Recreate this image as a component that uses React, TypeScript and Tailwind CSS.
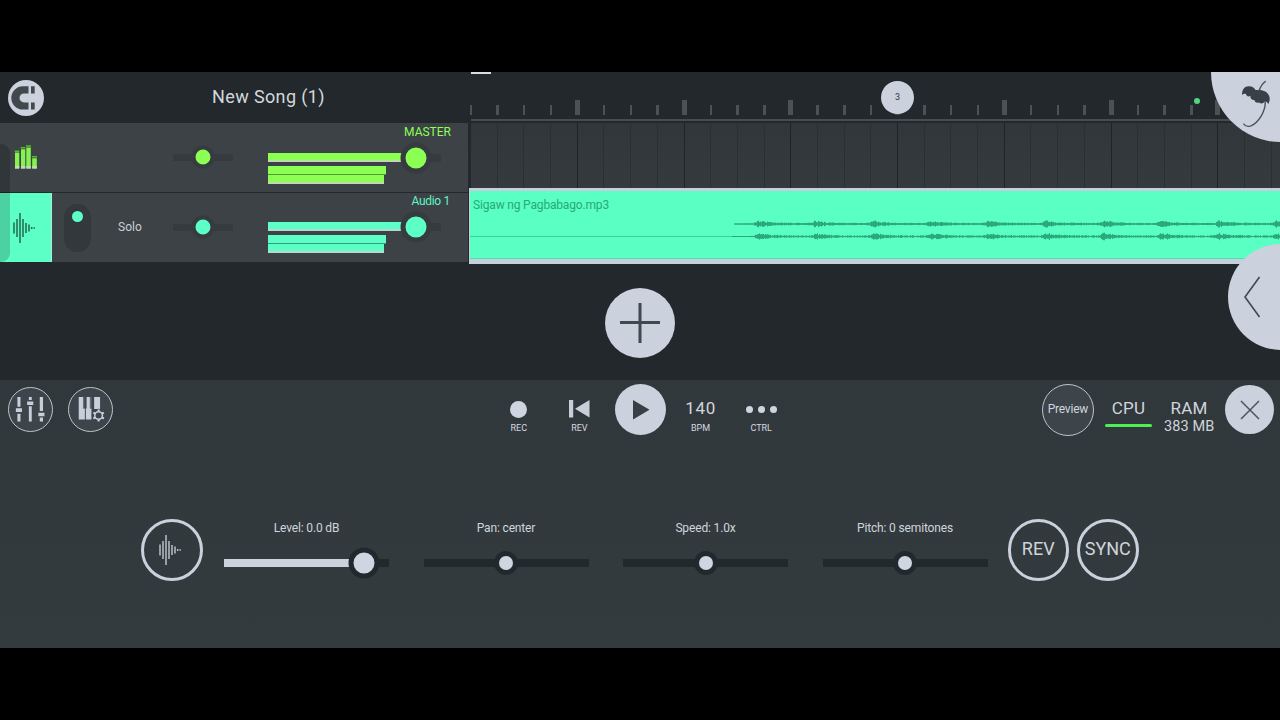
import clsx from 'clsx'
import type { ReactNode } from 'react'

const CELL = 26.69
const cells = Array.from({ length: 31 }, (_, i) => i)

const tracks = [
  { id: 1, name: 'MASTER', variant: 'master' },
  { id: 2, name: 'Audio 1', variant: 'audio' },
]

const sampleControls = [
  { id: 1, label: 'Level: 0.0 dB', value: 85, filled: true },
  { id: 2, label: 'Pan: center', value: 50, filled: false },
  { id: 3, label: 'Speed: 1.0x', value: 50, filled: false },
  { id: 4, label: 'Pitch: 0 semitones', value: 50, filled: false },
]

// one channel of the clip, a burst on every beat
const channelPath = (mid: number, seed: number) => {
  let s = seed
  const random = () => {
    s = (s * 16807) % 2147483647
    return s / 2147483647
  }
  let d = `M0 ${mid}`
  for (let x = 264; x < 811; x += 1) {
    const phase = (x - 287 + 57.6) % 57.6
    const attack = Math.exp(-(57.6 - phase) / 2)
    const beat = x < 284 ? 0 : 3.4 * (Math.exp(-phase / 12) + attack)
    const tail = x < 284 ? 0.3 + (x - 264) / 60 : 0.4 + random() * 0.8
    const amp = beat * (0.3 + random() * 0.7) + tail
    d += `M${x + 0.5} ${(mid - amp).toFixed(1)}V${(mid + amp).toFixed(1)}`
  }
  return d
}

const WaveIcon = ({ className }: { className?: string }) => (
  <svg viewBox="0 0 24 32" className={clsx('h-8 w-6', className)}>
    <g stroke="currentColor" strokeWidth="1.5">
      <path d="M2 10.5v11M5 7v18M8 1v30M11 7v18M14 11v10M17 12.5v7" />
      <path d="M19.7 15v2M22.2 15.3v1.4" />
    </g>
  </svg>
)

const MasterIcon = () => (
  <svg viewBox="0 0 24 24" className="h-6 w-6 overflow-visible">
    <path fill="#4fc51d" d="M.7 4.5h4.6v1.4H.7zM6.7 1h4.6v1.4H6.7zM12 -.7h5v1.4h-5zM18 10h5v1.4h-5z" />
    <path fill="#84f250" d="M1 6.6h4.3V22H1zM7 3.3h4.3V22H7zM12.3 1.5h4.5V22h-4.5zM18.2 12.2h4.6V22h-4.6z" />
    <path fill="#bfdcae" d="M1 20h4.3v2.7H1zM7 20h4.3v2.7H7zM12.3 20h4.5v2.7h-4.5zM18.2 20h4.6v2.7h-4.6z" />
  </svg>
)

const MagnetIcon = () => (
  <svg viewBox="0 0 36 36" className="h-9 w-9 shrink-0">
    <circle cx="18" cy="18" r="18" fill="#cbd1dd" />
    <path
      fill="#41484e"
      d="M20.5 6.2H15A11.6 11.6 0 0 0 15 29.6H20.5V22.4H16A4.5 4.5 0 0 1 16 13.4H20.5zM23 6.2h3.7v7.2h-3.7zM23 22.4h3.7v7.2h-3.7z"
    />
  </svg>
)

const UmbrellaIcon = () => (
  <svg viewBox="0 0 69 70" className="h-[70px] w-[69px]">
    <path
      fill="#394047"
      d="M31 23C31 17 34 14 38 14.3C41 14.2 43 15.5 44.5 18C48 18 54 17.5 57 22C59.5 25 59 29 57.2 32.3C56.5 30 55 29.2 53.5 29.8C52 31.8 50 32 48 30.5C46 31 43.5 30.5 43.5 28C40.5 28 39 26 39.5 23.7C37.5 25 35.5 24.5 35 22C33.5 21.5 32 22 31 23z"
    />
    <path fill="none" stroke="#4a5158" strokeWidth="1.4" strokeLinecap="round" d="M54.3 9.5C51 12 49.3 15 48 19M54.2 30C54.5 40 47 51 40 53.8C36.5 55 34 54 32.8 52" />
  </svg>
)

const MixerIcon = () => (
  <svg viewBox="0 0 45 45" className="h-full w-full">
    <path fill="#c9cfda" d="M8.8 9.5h3.2v10H8.8zM8.8 27h3.2v8H8.8zM20.8 9.5h3v3h-3zM20.8 19h3v16h-3zM32.2 9.5h3.4v14.5h-3.4zM32.2 31h3.4v4h-3.4z" />
    <path fill="#c9cfda" d="M7.2 21.2h6.4v4H7.2zM19 14.2h6.4v3.6H19zM30.7 26h6.4v3.5h-6.4z" />
  </svg>
)

const KeysIcon = () => (
  <svg viewBox="0 0 45 45" className="h-full w-full">
    <path fill="#c9cfda" d="M10.2 9.5h4.4v12h2v11.5h-6.4zM18.4 9.5h3.4v12h1.7v11.5h-5.9V21.5h.8zM26.3 9.5h6.2v12.5h-6.2z" />
    <path fill="#7f878f" d="M15 9.5h.9v11.5h-.9zM22.4 9.5h.9v11.5h-.9z" />
    <circle cx="31" cy="28.8" r="7.2" fill="#3d444a" />
    <circle cx="31" cy="28.8" r="4" fill="none" stroke="#c9cfda" strokeWidth="1.6" />
    <path stroke="#c9cfda" strokeWidth="2.2" d="M31 24.8v-2.3M31 32.8v2.3M34.5 26.8l2-1.1M27.5 26.8l-2-1.1M34.5 30.8l2 1.1M27.5 30.8l-2 1.1" />
  </svg>
)

const Slider = ({
  value,
  track,
  fill,
  knob,
  className,
}: {
  value: number
  track: string
  fill?: string
  knob: string
  className?: string
}) => (
  <div className={clsx('relative', track, className)}>
    {fill && <div className={clsx('h-full', fill)} style={{ width: `${value}%` }} />}
    <div
      className={clsx('absolute top-1/2 -translate-x-1/2 -translate-y-1/2 rounded-full', knob)}
      style={{ left: `${value}%` }}
    />
  </div>
)

const TrackRow = ({ name, variant }: { name: string; variant: string }) => {
  const isAudio = variant === 'audio'
  const bar = isAudio
    ? 'bg-[#5cffc6] border-b-2 border-[#b5d8cf]'
    : 'bg-[#8bff54] border-b-2 border-[#bedbac]'
  return (
    <div className="flex h-[69px] w-[468px] bg-[#3c4246]">
      <div
        className={clsx(
          'flex w-[52px] items-center',
          isAudio ? 'border-r border-[#a9efd5] bg-[#5cffc6] pl-[12px]' : 'pl-[14px]',
        )}
      >
        {isAudio ? <WaveIcon className="text-[#1f6a51]" /> : <MasterIcon />}
      </div>
      <div className="flex w-[121px] items-center">
        {isAudio && (
          <>
            <div className="ml-3 flex h-[48px] w-[27px] justify-center rounded-full bg-[#32383b] pt-[7px]">
              <div className="h-[11px] w-[11px] rounded-full bg-[#5cffc6]" />
            </div>
            <span className="ml-[27px] pb-[2px] text-[12px] leading-none text-[#c9cfd6]">Solo</span>
          </>
        )}
      </div>
      <div className="flex w-[95px] items-center pb-px">
        <Slider
          value={50}
          className="h-[7px] w-[60px]"
          track="bg-[#353b3f]"
          knob={clsx(
            'h-[23px] w-[23px] border-[4.5px] border-[#353b3f]',
            isAudio ? 'bg-[#5cffc6]' : 'bg-[#8bff54]',
          )}
        />
      </div>
      <div className="w-[183px]">
        <p
          className={clsx(
            'text-right text-[12px] leading-[14px]',
            isAudio
              ? 'h-[29px] pt-[1px] pr-[1px] tracking-[-0.3px] text-[#62f5c3]'
              : 'h-[30px] pt-[2px] text-[#8bff54]',
          )}
        >
          {name}
        </p>
        <Slider
          value={85.5}
          className="h-[9px] w-[173px]"
          track="bg-linear-to-b from-[#3c4246] from-10% via-[#353b3f] via-10% to-[#353b3f]"
          fill={bar}
          knob={clsx(
            'h-[31px] w-[31px] border-5 border-[#353b3f]',
            isAudio ? 'bg-[#5cffc6]' : 'bg-[#8bff54]',
          )}
        />
        <div
          className={clsx(
            'mt-[4px] h-[9px] w-[117.5px] border-b',
            isAudio ? 'border-[#359c79] bg-[#5cffc6]' : 'border-[#4f9a2c] bg-[#8bff54]',
          )}
        />
        <div className={clsx('h-[9px] w-[115.5px]', bar)} />
      </div>
    </div>
  )
}

const Ruler = () => (
  <div className="ml-[2px] flex h-[51px] flex-col justify-end">
    <div className="flex h-[15px] items-end">
      {cells.map((i) => (
        <div key={i} className="shrink-0" style={{ width: CELL }}>
          {i > 0 && i % 4 === 0 ? (
            <div className="-ml-[3px] h-[15px] w-[5px] bg-[#4b5155]" />
          ) : (
            <div className="-ml-[1.5px] h-[10px] w-[2.5px] bg-[#4b5155]" />
          )}
        </div>
      ))}
    </div>
    <div className="mt-[3.5px] mb-[2px] h-[2.5px] shrink-0 bg-[#464d51]" />
  </div>
)

const Playlist = () => (
  <div className="relative flex w-[811px] flex-col overflow-hidden">
    <Ruler />
    <div className="ml-[2px] flex h-[65px] overflow-hidden bg-linear-to-b from-[#30373b] to-[#353a3e]">
      {cells.map((i) => (
        <div
          key={i}
          className={clsx(
            'shrink-0 border-r',
            i % 4 === 3 ? 'border-[#1e2427]' : 'border-[#293034]',
          )}
          style={{ width: CELL }}
        />
      ))}
    </div>
    <div className="relative h-[76px] border-t-3 border-b-5 border-l border-[#c5d0da] bg-[#5affc4]">
      <span className="absolute top-[6.5px] left-[3px] text-[12px] leading-[14px] tracking-[-0.17px] text-[#27a97b]">
        Sigaw ng Pagbabago.mp3
      </span>
      <svg viewBox="0 0 811 68" className="h-[68px] w-[811px]">
        <path d="M0 45.5H262" stroke="#3ed19e" strokeWidth="1" />
        <path d="M264 33H811M262 45.5H811" stroke="#27a67a" strokeWidth="1" />
        <path d={channelPath(33, 71)} stroke="#2ba87d" strokeWidth="1" />
        <path d={channelPath(45.5, 913)} stroke="#2ba87d" strokeWidth="1" />
        <path d="M0 67.5H811" stroke="#52e0b0" strokeWidth="1" />
      </svg>
    </div>
    <div className="absolute top-0 left-[2px] h-[2px] w-5 bg-[#d9dde2]" />
    <div className="absolute top-[9px] left-[412px] flex h-[33px] w-[33px] items-center justify-center rounded-full bg-[#cbd1dd] pb-px text-[9px] leading-none text-[#30363d]">
      3
    </div>
    <div className="absolute top-[26px] left-[725px] h-[6px] w-[6px] rounded-full bg-[#4fd684]" />
  </div>
)

const TransportItem = ({ label, children }: { label: string; children: ReactNode }) => (
  <div className="flex w-[60.6px] flex-col items-center pt-[7px]">
    <div className="flex h-[30px] items-center pt-[2px]">{children}</div>
    <span className="text-[9px] leading-[10px] text-[#d5dae0]">{label}</span>
  </div>
)

const Transport = () => (
  <div className="grid h-[60px] grid-cols-[1fr_auto_1fr] items-center">
    <div className="flex pb-px">
      <div className="flex w-[60.6px] justify-center">
        <div className="h-[45px] w-[45px] rounded-full border-[1.5px] border-[#bcc3cb] bg-[#3d444a]">
          <MixerIcon />
        </div>
      </div>
      <div className="flex w-[60.6px] justify-center">
        <div className="h-[45px] w-[45px] rounded-full border-[1.5px] border-[#bcc3cb] bg-[#3d444a]">
          <KeysIcon />
        </div>
      </div>
    </div>
    <div className="flex items-center pb-px">
      <TransportItem label="REC">
        <div className="h-[17px] w-[17px] rounded-full bg-[#cfd5e0]" />
      </TransportItem>
      <TransportItem label="REV">
        <svg viewBox="0 0 21 18" className="h-[18px] w-[21px]">
          <path fill="#c9cfd9" d="M0 0h4.2v17.5H0zM20.5 0v17.5L6 8.8z" />
        </svg>
      </TransportItem>
      <div className="flex w-[60.6px] justify-center">
        <div className="flex h-[51px] w-[51px] items-center justify-center rounded-full bg-[#cbd1dd]">
          <svg viewBox="0 0 17 20" className="ml-[3px] h-5 w-[17px]">
            <path fill="#383f45" d="M0 0L16.5 9.7L0 19.4z" />
          </svg>
        </div>
      </div>
      <TransportItem label="BPM">
        <span className="pb-[2px] text-[17px] leading-none tracking-[0.6px] text-[#d0d6dd]">140</span>
      </TransportItem>
      <TransportItem label="CTRL">
        <div className="flex gap-[5px]">
          <div className="h-[7px] w-[7px] rounded-full bg-[#cfd5e0]" />
          <div className="h-[7px] w-[7px] rounded-full bg-[#cfd5e0]" />
          <div className="h-[7px] w-[7px] rounded-full bg-[#cfd5e0]" />
        </div>
      </TransportItem>
    </div>
    <div className="flex items-center justify-end">
      <div className="flex w-[60.6px] justify-center">
        <div className="flex h-[52px] w-[52px] items-center justify-center rounded-full border border-[#bcc3cb] bg-[#3d444a] pb-[2px] text-[12px] leading-none tracking-[-0.2px] whitespace-nowrap text-[#d0d6dd]">
          Preview
        </div>
      </div>
      <div className="flex h-[24px] w-[60.6px] flex-col items-center">
        <span className="text-[17px] leading-[20px] tracking-[0.2px] text-[#cfd5dc]">CPU</span>
        <div className="mt-[6px] h-[3px] w-[47px] shrink-0 rounded-full bg-[#4df053]" />
      </div>
      <div className="flex h-[24px] w-[60.6px] flex-col items-center whitespace-nowrap">
        <span className="text-[17px] leading-[20px] tracking-[0.2px] text-[#cfd5dc]">RAM</span>
        <span className="mt-px text-[14.5px] leading-[16px] tracking-[0.1px] text-[#cfd5dc]">383 MB</span>
      </div>
      <div className="flex w-[60.6px] justify-center pb-px">
        <div className="flex h-[49px] w-[49px] items-center justify-center rounded-full bg-[#cbd1dd]">
          <svg viewBox="0 0 20 20" className="h-5 w-5">
            <path fill="none" stroke="#4c535a" strokeWidth="1.5" d="M1 1l18 18M19 1L1 19" />
          </svg>
        </div>
      </div>
    </div>
  </div>
)

const RingButton = ({ children }: { children: ReactNode }) => (
  <div className="flex h-[61.5px] w-[61.5px] shrink-0 items-center justify-center rounded-full border-[3px] border-[#cbd1dc] text-[18px] leading-none text-[#cfd5dc]">
    {children}
  </div>
)

const SamplePanel = () => (
  <div className="flex pt-[79px] pl-[141px]">
    <RingButton>
      <WaveIcon className="mr-[3px] text-[#b9c0c8]" />
    </RingButton>
    <div className="ml-[21.5px] flex gap-[34.5px]">
      {sampleControls.map((control) => (
        <div key={control.id} className="flex w-[165px] flex-col items-center">
          <span className="pt-px text-[12px] leading-[16px] tracking-[-0.15px] text-[#cfd5dc]">{control.label}</span>
          <Slider
            value={control.value}
            className="mt-[23px] h-[8px] w-full"
            track="bg-[#22292d]"
            fill={control.filled ? 'bg-[#cbd1dd]' : undefined}
            knob={clsx(
              'border-[5px] border-[#22292d] bg-[#cfd5e1]',
              control.filled ? 'h-[31px] w-[31px]' : 'h-[24px] w-[24px]',
            )}
          />
        </div>
      ))}
    </div>
    <div className="ml-[20px] flex gap-[8px]">
      <RingButton>
        <span className="mb-[2px]">REV</span>
      </RingButton>
      <RingButton>
        <span className="mb-[2px]">SYNC</span>
      </RingButton>
    </div>
  </div>
)

const App = () => {
  return (
    <main className="h-[720px] w-[1280px] overflow-hidden bg-black py-[72px] font-['Roboto',sans-serif]">
      <div className="relative flex h-[576px] flex-col overflow-hidden bg-[#22282b]">
        <section className="relative h-[308px]">
          <div className="flex">
            <div className="w-[469px]">
              <header className="flex h-[51px] items-center pl-[8px]">
                <MagnetIcon />
                <h1 className="ml-[168px] pb-[2px] text-[18px] leading-none tracking-[0.38px] text-[#d3d8de]">
                  New Song (1)
                </h1>
              </header>
              <div className="flex flex-col gap-px">
                {tracks.map((track) => (
                  <TrackRow key={track.id} name={track.name} variant={track.variant} />
                ))}
              </div>
            </div>
            <Playlist />
          </div>
          {/* add track */}
          <div className="mx-auto mt-[24px] flex h-[70px] w-[70px] items-center justify-center rounded-full bg-[#cbd1dd]">
            <svg viewBox="0 0 40 40" className="h-10 w-10">
              <path stroke="#41484f" strokeWidth="3" d="M20 0v40M0 19.5h40" />
            </svg>
          </div>
          {/* floating handles */}
          <div className="absolute top-[72px] left-0 h-[118px] w-[10px] rounded-r-[9px] bg-black/18" />
          <div className="absolute -top-[70px] left-[1211px] flex h-[140px] w-[140px] items-end rounded-full bg-[#cbd1dd]">
            <UmbrellaIcon />
          </div>
          <div className="absolute top-[172px] left-[1228px] flex h-[106px] w-[106px] items-center rounded-full bg-[#cbd1dd]">
            <svg viewBox="0 0 17 42" className="ml-[16px] h-[42px] w-[17px]">
              <path fill="none" stroke="#41484f" strokeWidth="1.6" d="M15.5 1L1 21L15.5 41" />
            </svg>
          </div>
        </section>
        <section className="h-[268px] bg-linear-to-b from-[#31383c] to-[#343b3f]">
          <Transport />
          <SamplePanel />
        </section>
      </div>
    </main>
  )
}

export default App
